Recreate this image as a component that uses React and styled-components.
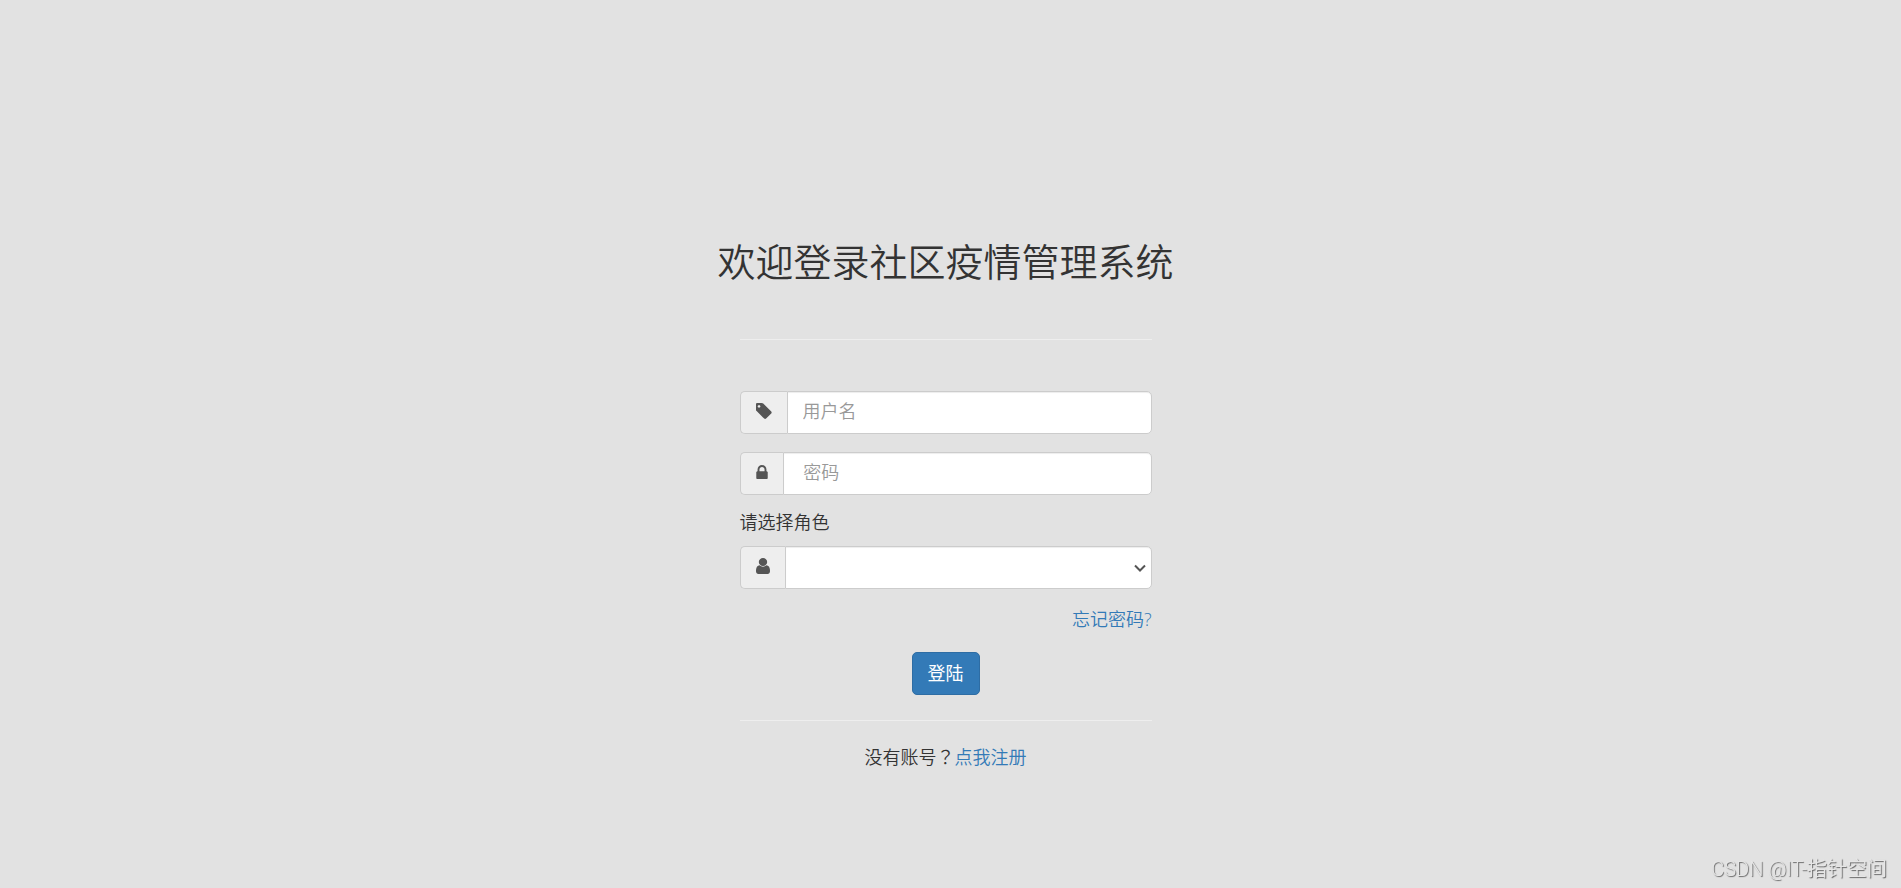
import React, { useState } from 'react';
import styled, { createGlobalStyle } from 'styled-components';

const App = () => {
  const [credentials, setCredentials] = useState({ username: '', password: '', role: '' });

  const handleSubmit = (e) => {
    e.preventDefault();
  };

  const onChange = (e) => {
    setCredentials({ ...credentials, [e.target.name]: e.target.value });
  };

  return (
    <>
      <GlobalStyle />
      <Page>
        <Title>欢迎登录社区疫情管理系统</Title>
        <Form onSubmit={handleSubmit}>
          <Divider />
          <Fields>
            <InputGroup>
              <Addon htmlFor="username" aria-label="用户名">
                <Icon $width={16} $height={16} viewBox="192 128 1452 1515">
                  <path d="M576 448q0-53-37.5-90.5t-90.5-37.5-90.5 37.5-37.5 90.5 37.5 90.5 90.5 37.5 90.5-37.5 37.5-90.5zm1067 576q0 53-37 90l-491 492q-39 37-91 37-53 0-90-37l-715-716q-38-37-64.5-101t-26.5-117v-416q0-52 38-90t90-38h416q53 0 117 26.5t102 64.5l715 714q37 39 37 91z" />
                </Icon>
              </Addon>
              <Input
                type="text"
                id="username"
                name="username"
                placeholder="用户名"
                value={credentials.username}
                onChange={onChange}
              />
            </InputGroup>
            <InputGroup>
              <Addon htmlFor="password" aria-label="密码">
                <Icon $width={12} $height={14} viewBox="320 128 1152 1408">
                  <path d="M640 768h512v-192q0-106-75-181t-181-75-181 75-75 181v192zm832 96v576q0 40-28 68t-68 28h-960q-40 0-68-28t-28-68v-576q0-40 28-68t68-28h32v-192q0-184 132-316t316-132 316 132 132 316v192h32q40 0 68 28t28 68z" />
                </Icon>
              </Addon>
              <Input
                type="password"
                id="password"
                name="password"
                placeholder=" 密码"
                value={credentials.password}
                onChange={onChange}
              />
            </InputGroup>
          </Fields>
          <Label htmlFor="role">请选择角色</Label>
          <InputGroup>
            <Addon as="span">
              <Icon $width={14} $height={16} viewBox="256 128 1280 1536" preserveAspectRatio="none">
                <path d="M1536 1399q0 109-62.5 187t-150.5 78h-854q-88 0-150.5-78t-62.5-187q0-85 8.5-160.5t31.5-152 58.5-131 94-89 134.5-34.5q131 128 313 128t313-128q76 0 134.5 34.5t94 89 58.5 131 31.5 152 8.5 160.5zm-256-887q0 159-112.5 271.5t-271.5 112.5-271.5-112.5-112.5-271.5 112.5-271.5 271.5-112.5 271.5 112.5 112.5 271.5z" />
              </Icon>
            </Addon>
            <SelectBox>
              <Select id="role" name="role" value={credentials.role} onChange={onChange}>
                <option value=""></option>
              </Select>
              <Arrow viewBox="0 0 12 8">
                <path d="M1 1.5l5 5 5-5" />
              </Arrow>
            </SelectBox>
          </InputGroup>
          <Forgot>
            <Link href="#forgot">忘记密码?</Link>
          </Forgot>
          <Button type="submit">登陆</Button>
          <Divider />
          <Register>
            没有账号<Mark>？</Mark>
            <Link href="#register">点我注册</Link>
          </Register>
        </Form>
        <Watermark>CSDN @IT-指针空间</Watermark>
      </Page>
    </>
  );
};

const GlobalStyle = createGlobalStyle`
  * {
    box-sizing: border-box;
  }

  body {
    margin: 0;
    background-color: #e2e2e2;
    color: #333;
    font-family: 'Open Sans', 'Noto Sans CJK SC', sans-serif;
    font-size: 18px;
    font-weight: 350;
    line-height: 26px;
  }
`;

const Page = styled.main`
  display: flex;
  flex-direction: column;
  align-items: center;
  min-height: 100vh;
  padding: 239px 10px 20px 0;
`;

const Title = styled.h2`
  margin: 0 0 56px;
  font-size: 38px;
  font-weight: 350;
  line-height: 44px;
`;

const Form = styled.form`
  display: flex;
  flex-direction: column;
  width: 100%;
  max-width: 412px;
`;

const Divider = styled.hr`
  width: 100%;
  margin: 0;
  border: 0;
  border-top: 1px solid #eee;
`;

const Fields = styled.div`
  display: flex;
  flex-direction: column;
  gap: 18px;
  margin-top: 51px;
`;

const InputGroup = styled.div`
  display: flex;
  height: 43px;
`;

const Addon = styled.label`
  display: flex;
  align-items: center;
  padding: 0 15px 4px;
  background-color: #eee;
  border: 1px solid #ccc;
  border-right: 0;
  border-radius: 5px 0 0 5px;
  color: #555;
`;

const Icon = styled.svg`
  width: ${(props) => props.$width}px;
  height: ${(props) => props.$height}px;
  fill: currentColor;
`;

const Input = styled.input`
  flex: 1;
  min-width: 0;
  padding: 0 15px 4px;
  background-color: #fff;
  border: 1px solid #ccc;
  border-radius: 0 5px 5px 0;
  box-shadow: inset 0 1px 1px rgba(0, 0, 0, 0.075);
  color: #555;
  font: inherit;
  outline: none;

  &::placeholder {
    color: #999;
    opacity: 1;
  }

  &:focus {
    border-color: #66afe9;
  }
`;

const SelectBox = styled.div`
  position: relative;
  display: flex;
  flex: 1;
`;

const Select = styled.select`
  flex: 1;
  min-width: 0;
  padding: 0 28px 0 15px;
  appearance: none;
  background-color: #fff;
  border: 1px solid #ccc;
  border-radius: 0 5px 5px 0;
  box-shadow: inset 0 1px 1px rgba(0, 0, 0, 0.075);
  color: #555;
  font: inherit;
  outline: none;
`;

/* sits over the right end of the select */
const Arrow = styled.svg`
  position: absolute;
  top: 18px;
  right: 6px;
  width: 12px;
  height: 8px;
  fill: none;
  stroke: #555;
  stroke-width: 2;
  pointer-events: none;
`;

const Label = styled.label`
  margin: 14px 0 11px;
`;

const Forgot = styled.div`
  margin: 17px 0 20px;
  text-align: right;
`;

const Link = styled.a`
  color: #337ab7;
  text-decoration: none;

  &:hover {
    text-decoration: underline;
  }
`;

const Button = styled.button`
  align-self: center;
  height: 43px;
  margin-bottom: 25px;
  padding: 0 15px 2px;
  background-color: #337ab7;
  border: 1px solid #2e6da4;
  border-radius: 5px;
  color: #fff;
  font: inherit;
  font-weight: 400;
  cursor: pointer;

  &:hover {
    background-color: #286090;
  }
`;

const Register = styled.p`
  margin: 22px 0 0;
  text-align: center;
`;

/* the TC face centres full-width punctuation */
const Mark = styled.span`
  font-family: 'Noto Sans CJK TC', sans-serif;
`;

const Watermark = styled.span`
  position: fixed;
  right: 14px;
  bottom: 6px;
  color: #e6e6e6;
  font-family: Roboto, 'Noto Sans CJK SC', sans-serif;
  font-size: 20px;
  text-shadow: 1px 1px 1px #666;
`;

export default App;
